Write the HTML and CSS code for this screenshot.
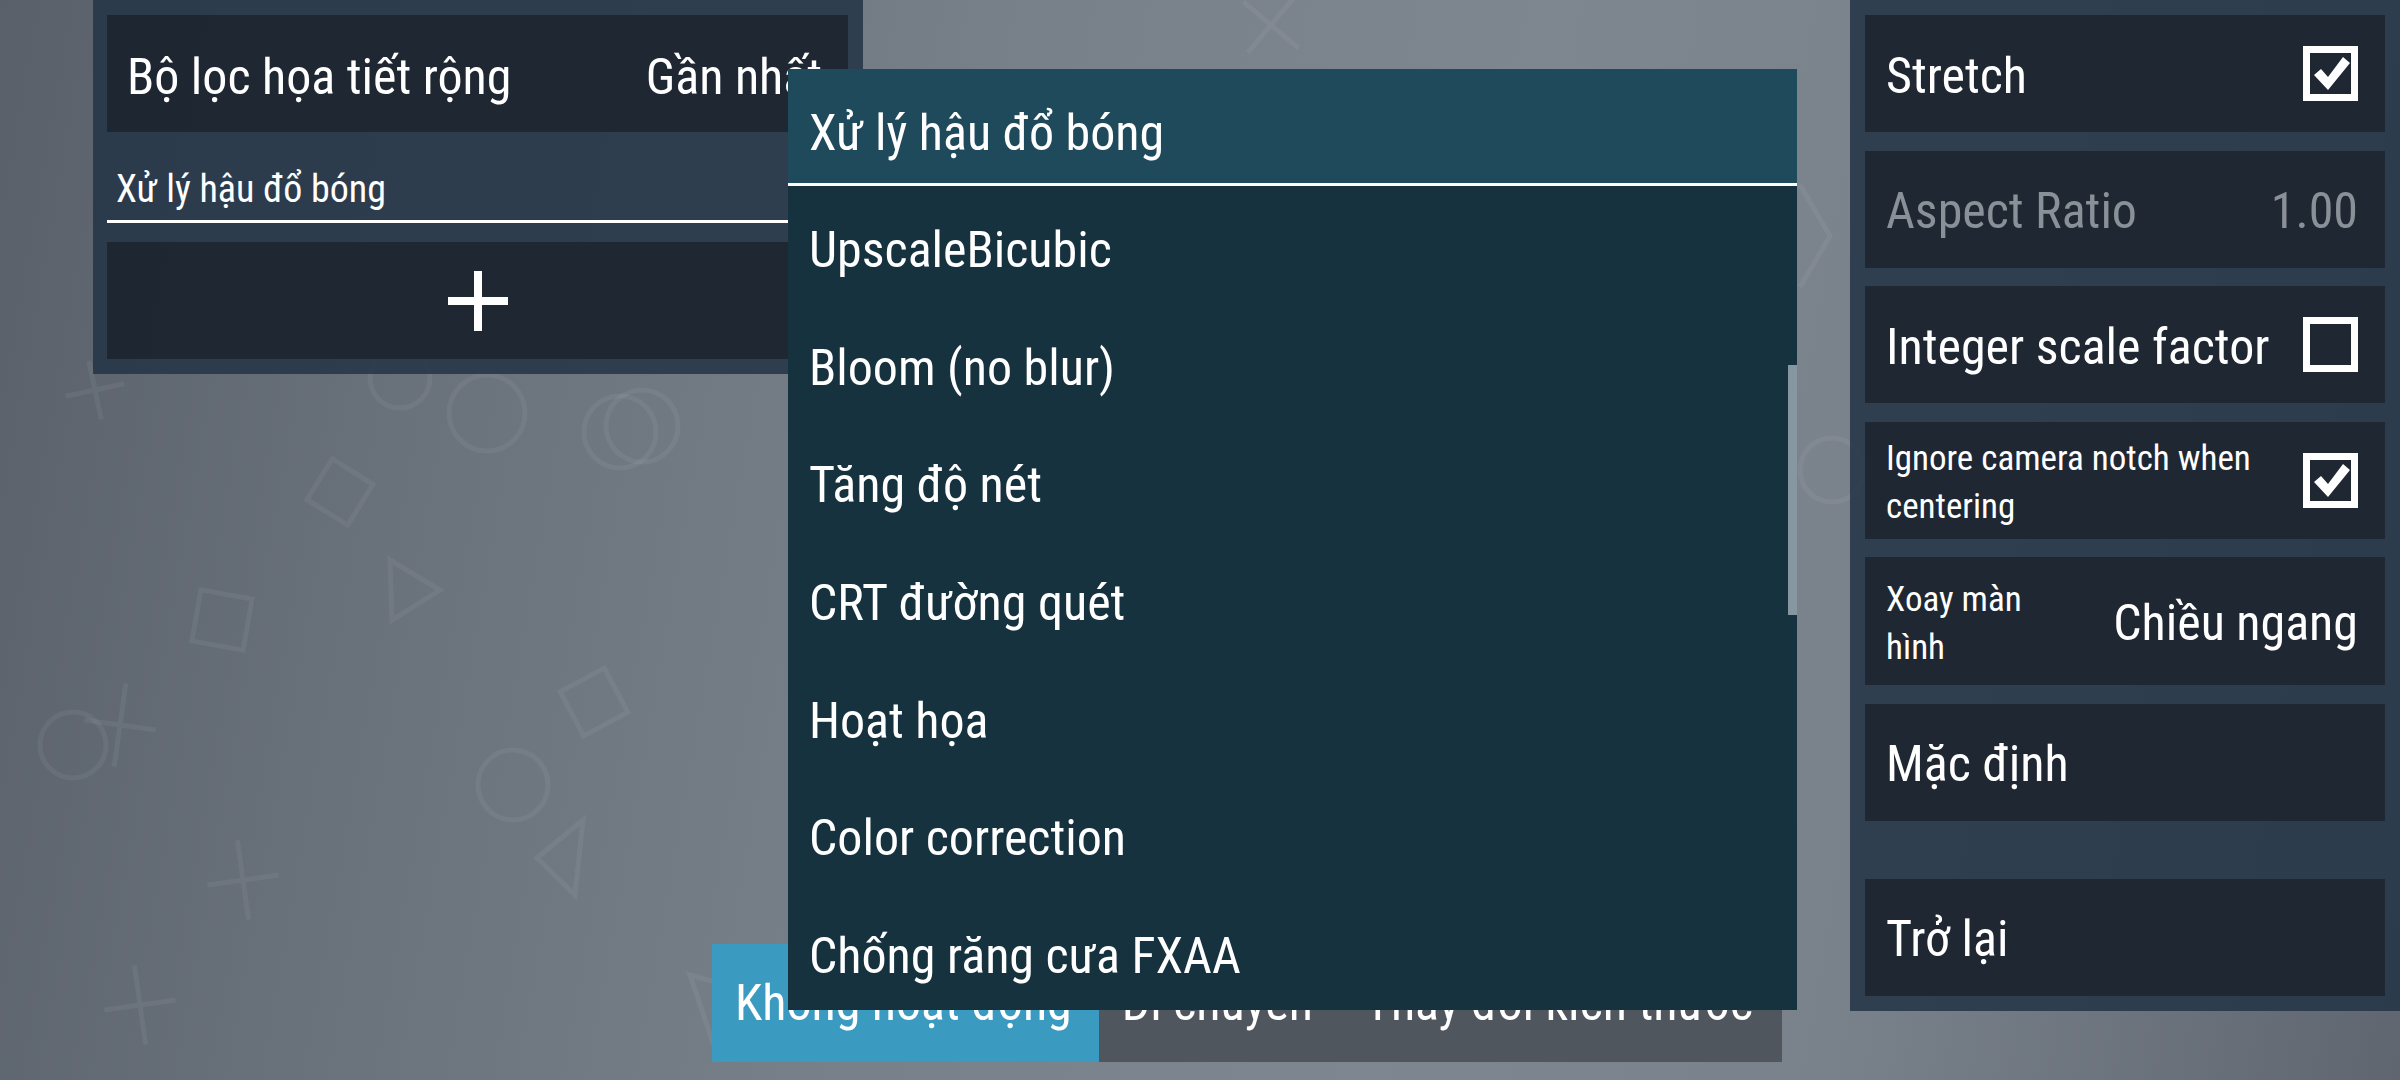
FILE: index.html
```html
<!DOCTYPE html>
<html lang="vi">
<head>
<meta charset="utf-8">
<title>Display layout</title>
<link rel="stylesheet" href="styles.css">
</head>
<body>
<svg class="bg-symbols" width="2400" height="1080" viewBox="0 0 2400 1080">
  <g fill="none" stroke="rgba(255,255,255,0.055)" stroke-width="5">
    <g transform="translate(95 390) rotate(-12)"><path d="M-30 0H30M0 -30V30"/></g>
    <circle cx="400" cy="378" r="30"/>
    <circle cx="487" cy="413" r="38"/>
    <circle cx="620" cy="432" r="36"/>
    <circle cx="642" cy="426" r="36"/>
    <rect x="-24" y="-24" width="48" height="48" transform="translate(340 492) rotate(32)"/>
    <path d="M390 560 L440 590 L392 620 Z"/>
    <rect x="-26" y="-26" width="52" height="52" transform="translate(222 620) rotate(10)"/>
    <circle cx="73" cy="745" r="33"/>
    <g transform="translate(120 725) rotate(8)"><path d="M-36 0H36M0 -42V42"/></g>
    <rect x="-25" y="-25" width="50" height="50" transform="translate(594 702) rotate(-28)"/>
    <circle cx="513" cy="785" r="35"/>
    <path d="M583 820 L537 858 L575 895 Z"/>
    <g transform="translate(243 880) rotate(-8)"><path d="M-36 0H36M0 -40V40"/></g>
    <g transform="translate(140 1005) rotate(-8)"><path d="M-36 0H36M0 -40V40"/></g>
    <path d="M690 975 L745 990 L712 1040 Z"/>
    <g transform="translate(1271 25) rotate(40)"><path d="M-36 0H36M0 -36V36"/></g>
    <path d="M1800 185 L1830 236 L1800 287"/>
    <circle cx="1832" cy="470" r="32"/>
  </g>
</svg>

<div class="screen">
  <section class="left-panel">
    <div class="row">
      <span class="row-label">Bộ lọc họa tiết rộng</span>
      <span class="row-value">Gần nhất</span>
    </div>
    <div class="section-header">Xử lý hậu đổ bóng</div>
    <div class="row add-row">
      <svg class="plus" width="60" height="60" viewBox="0 0 60 60"><path d="M30 0V60M0 30H60" stroke="#fff" stroke-width="8"/></svg>
    </div>
  </section>

  <section class="right-panel">
    <div class="row">
      <span class="row-label">Stretch</span>
      <svg class="checkbox" width="55" height="55" viewBox="0 0 55 55"><rect x="3.5" y="3.5" width="48" height="48" fill="none" stroke="#fff" stroke-width="7"/><path d="M11 29 L18 23 L25 31 L40 11 L47 17 L25 44 Z" fill="#fff"/></svg>
    </div>
    <div class="row disabled">
      <span class="row-label">Aspect Ratio</span>
      <span class="row-value">1.00</span>
    </div>
    <div class="row">
      <span class="row-label">Integer scale factor</span>
      <svg class="checkbox" width="55" height="55" viewBox="0 0 55 55"><rect x="3.5" y="3.5" width="48" height="48" fill="none" stroke="#fff" stroke-width="7"/></svg>
    </div>
    <div class="row">
      <span class="row-label small">Ignore camera notch when centering</span>
      <svg class="checkbox" width="55" height="55" viewBox="0 0 55 55"><rect x="3.5" y="3.5" width="48" height="48" fill="none" stroke="#fff" stroke-width="7"/><path d="M11 29 L18 23 L25 31 L40 11 L47 17 L25 44 Z" fill="#fff"/></svg>
    </div>
    <div class="row tall">
      <span class="row-label small narrow">Xoay màn hình</span>
      <span class="row-value">Chiều ngang</span>
    </div>
    <div class="row">
      <span class="row-label">Mặc định</span>
    </div>
    <div class="row back-row">
      <span class="row-label">Trở lại</span>
    </div>
  </section>
</div>

<div class="mode-bar">
  <div class="mode selected">Không hoạt động</div>
  <div class="mode">Di chuyển</div>
  <div class="mode">Thay đổi kích thước</div>
</div>

<div class="popup">
  <div class="popup-title">Xử lý hậu đổ bóng</div>
  <ul class="popup-list">
    <li>UpscaleBicubic</li>
    <li>Bloom (no blur)</li>
    <li>Tăng độ nét</li>
    <li>CRT đường quét</li>
    <li>Hoạt họa</li>
    <li>Color correction</li>
    <li>Chống răng cưa FXAA</li>
  </ul>
  <div class="scrollbar"></div>
</div>
</body>
</html>
```

FILE: styles.css
```css
html, body {
  margin: 0;
  padding: 0;
}

body {
  width: 2400px;
  height: 1080px;
  overflow: hidden;
  position: relative;
  font-family: "Roboto Condensed", "Roboto", "Liberation Sans Narrow", sans-serif;
  font-stretch: condensed;
  color: #fff;
  background: linear-gradient(100deg, #59606a 0%, #69717b 18%, #78808a 40%, #7e868f 60%, #79818a 78%, #5f666f 100%);
}

.bg-symbols {
  position: absolute;
  left: 0;
  top: 0;
  z-index: 0;
}

.screen {
  position: relative;
  z-index: 1;
  display: flex;
  justify-content: space-between;
  align-items: flex-start;
  height: 1080px;
}

.left-panel {
  margin-left: 93px;
  width: 770px;
  box-sizing: border-box;
  padding: 15px 15px 15px 14px;
  background: rgba(36, 52, 70, 0.86);
  display: flex;
  flex-direction: column;
}

.right-panel {
  width: 550px;
  box-sizing: border-box;
  padding: 15px;
  background: rgba(36, 52, 70, 0.86);
  display: flex;
  flex-direction: column;
  gap: 18.6px;
}

.row {
  height: 117px;
  box-sizing: border-box;
  display: flex;
  align-items: center;
  justify-content: space-between;
  gap: 20px;
  padding: 7px 26px 0 20px;
  background: rgba(28, 34, 44, 0.8);
  font-size: 50px;
  line-height: 60px;
  white-space: nowrap;
}

.right-panel .row {
  padding: 4px 27px 0 21px;
}

.row-label.small {
  font-size: 35px;
  line-height: 48px;
  white-space: normal;
  margin-top: 2px;
}

.row-label.narrow {
  width: 180px;
}

.row.tall {
  height: 128px;
}

.row.disabled {
  color: #8a9097;
}

.back-row {
  margin-top: 39px;
}

.checkbox {
  flex: none;
  margin-top: -4px;
}

.section-header {
  height: 91px;
  box-sizing: border-box;
  display: flex;
  align-items: flex-end;
  padding: 0 0 8px 9px;
  border-bottom: 3px solid #fff;
  margin-bottom: 19px;
  font-size: 38px;
  line-height: 46px;
}

.add-row {
  justify-content: center;
  padding: 0;
}

.plus {
  display: block;
}

.mode-bar {
  position: absolute;
  left: 712px;
  top: 944px;
  z-index: 2;
  display: flex;
  height: 118px;
  background: #50565e;
}

.mode {
  display: flex;
  align-items: center;
  padding: 0 29px 0 23px;
  font-size: 50px;
  white-space: nowrap;
}

.mode.selected {
  background: #3a9abf;
  padding-right: 27px;
}

.popup {
  position: absolute;
  left: 788px;
  top: 69px;
  z-index: 3;
  width: 1009px;
  background: #17323f;
}

.popup-title {
  height: 117px;
  box-sizing: border-box;
  display: flex;
  align-items: center;
  padding: 13px 21px 0;
  background: #1f4a5b;
  border-bottom: 3px solid #fff;
  font-size: 50px;
}

.popup-list {
  list-style: none;
  margin: 0;
  padding: 0;
}

.popup-list li {
  height: 117.7px;
  box-sizing: border-box;
  display: flex;
  align-items: center;
  padding: 10px 21px 0;
  font-size: 50px;
  white-space: nowrap;
}

.scrollbar {
  position: absolute;
  right: 0;
  top: 296px;
  width: 9px;
  height: 250px;
  background: #8797a1;
}
```
